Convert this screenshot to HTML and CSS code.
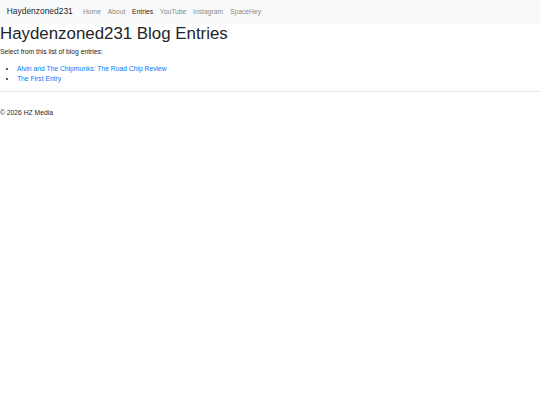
FILE: index.html
```html
<!DOCTYPE html>
<html lang="en">
<head>
<meta charset="utf-8">
<title>Haydenzoned231 Blog Entries</title>
<link rel="stylesheet" href="styles.css">
</head>
<body>
<nav class="navbar">
  <a class="brand" href="#">Haydenzoned231</a>
  <ul class="nav">
    <li><a class="nav-link" href="#">Home</a></li>
    <li><a class="nav-link" href="#">About</a></li>
    <li><a class="nav-link active" href="#">Entries</a></li>
    <li><a class="nav-link" href="#">YouTube</a></li>
    <li><a class="nav-link" href="#">Instagram</a></li>
    <li><a class="nav-link" href="#">SpaceHey</a></li>
  </ul>
</nav>
<main class="content">
  <h1 class="title">Haydenzoned231 Blog Entries</h1>
  <p class="intro">Select from this list of blog entries:</p>
  <ul class="entries">
    <li><a href="#">Alvin and The Chipmunks: The Road Chip Review</a></li>
    <li><a href="#">The First Entry</a></li>
  </ul>
</main>
<hr class="divider">
<footer class="footer">© 2026 HZ Media</footer>
</body>
</html>
```
FILE: styles.css
```css
html {
  font-size: 6.75px;
}
body {
  margin: 0;
  font-family: "Liberation Sans", Arial, sans-serif;
  font-size: 1rem;
  line-height: 1.5;
  color: #212529;
  background: #fff;
}
a {
  color: #007bff;
  text-decoration: none;
}
.navbar {
  display: flex;
  align-items: center;
  padding: 0.5rem 1rem;
  background: #f8f9fa;
}
.brand {
  display: inline-block;
  padding: 0.3125rem 0;
  margin-right: 1rem;
  font-size: 1.25rem;
  line-height: 1.5;
  color: rgba(0, 0, 0, 0.9);
  white-space: nowrap;
}
.nav {
  display: flex;
  list-style: none;
  margin: 0;
  padding: 0;
}
.nav-link {
  display: block;
  padding: 0.5rem 0.5rem;
  color: rgba(0, 0, 0, 0.5);
}
.nav-link.active {
  color: rgba(0, 0, 0, 0.9);
}
.title {
  margin: 0 0 0.5rem;
  font-size: 2.5rem;
  font-weight: 500;
  line-height: 1.2;
}
.intro {
  margin: 0 0 1rem;
}
.entries {
  margin: 0 0 1rem;
  padding-left: 2.5rem;
}
.divider {
  margin: 1rem 0;
  border: 0;
  border-top: 1px solid rgba(0, 0, 0, 0.1);
}
.footer {
  padding: 1.3rem 0 1rem;
}
```
